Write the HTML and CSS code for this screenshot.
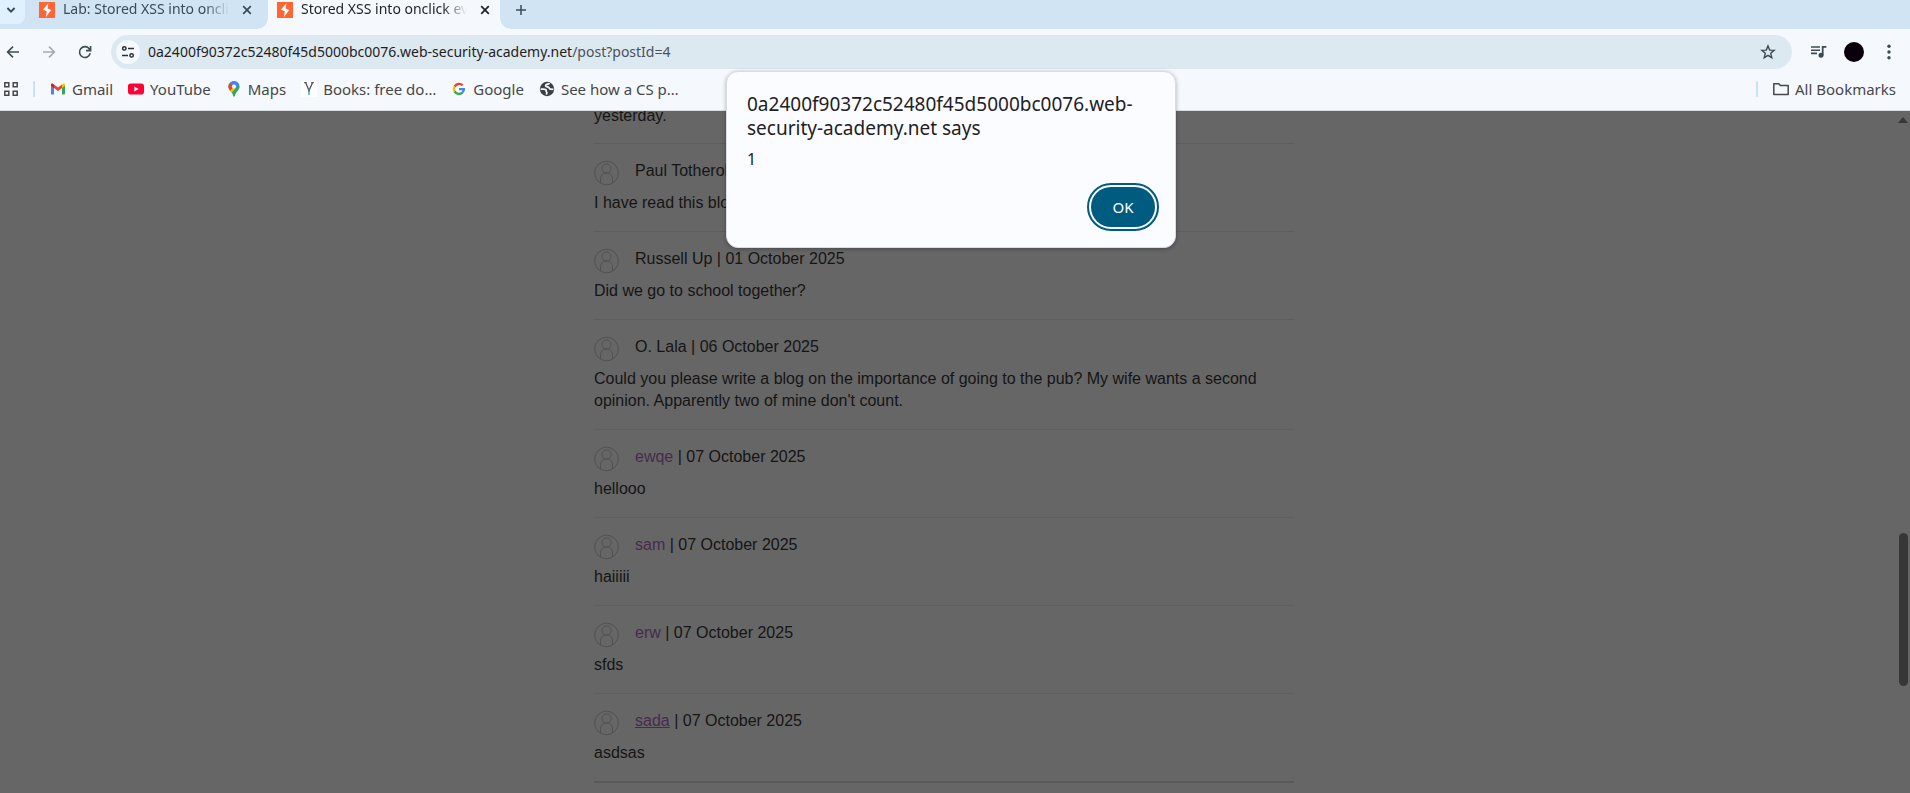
FILE: index.html
```html
<!DOCTYPE html>
<html lang="en">
<head>
<meta charset="utf-8">
<title>Stored XSS into onclick event</title>
<link rel="stylesheet" href="styles.css">
</head>
<body>
<svg class="defs" aria-hidden="true">
  <symbol id="burp" viewBox="0 0 16 16">
    <rect width="16" height="16" fill="#ff6633"/>
    <path d="M9.400 1L4 7.800l3.800 1.400L6.800 15.200 12.200 8 8.600 6.600z" fill="#fff"/>
  </symbol>
  <symbol id="cross" viewBox="0 0 10 10">
    <path d="M1.2 1.2l7.6 7.6M8.8 1.2L1.2 8.8" fill="none" stroke="currentColor" stroke-width="1.7"/>
  </symbol>
  <symbol id="avatar" viewBox="0 0 26 26">
    <g fill="none" stroke="currentColor" stroke-width="1">
      <circle cx="13" cy="13" r="12.3"/>
      <circle cx="13" cy="8.3" r="4.7"/>
      <path d="M6.8 23.4v-4.6c0-3.6 2.4-5.9 6.2-5.9s6.2 2.3 6.2 5.9v4.6"/>
    </g>
  </symbol>
</svg>

<div class="browser">
  <header class="chrome">
    <div class="tabstrip">
      <button class="tab-search" aria-label="Search tabs">
        <svg width="10" height="10" viewBox="0 0 10 10"><path d="M1.4 3l3.6 3.6L8.6 3" fill="none" stroke="currentColor" stroke-width="1.9"/></svg>
      </button>
      <div class="tab">
        <svg class="favicon"><use href="#burp"/></svg>
        <span class="tab-title">Lab: Stored XSS into onclick event</span>
        <button class="tab-close" aria-label="Close tab"><svg width="10" height="10"><use href="#cross"/></svg></button>
      </div>
      <div class="tab tab-active">
        <svg class="favicon"><use href="#burp"/></svg>
        <span class="tab-title">Stored XSS into onclick event</span>
        <button class="tab-close" aria-label="Close tab"><svg width="10" height="10"><use href="#cross"/></svg></button>
      </div>
      <button class="new-tab" aria-label="New tab">
        <svg width="12" height="12" viewBox="0 0 12 12"><path d="M6 1v10M1 6h10" fill="none" stroke="currentColor" stroke-width="1.5"/></svg>
      </button>
    </div>

    <div class="toolbar">
      <div class="nav">
        <button aria-label="Back"><svg width="14" height="14" viewBox="0 0 14 14"><path d="M13 7H2M7 1.6L1.6 7 7 12.4" fill="none" stroke="currentColor" stroke-width="1.6"/></svg></button>
        <button aria-label="Forward" disabled><svg width="14" height="14" viewBox="0 0 14 14"><path d="M1 7h11M7 1.6L12.4 7 7 12.4" fill="none" stroke="currentColor" stroke-width="1.6"/></svg></button>
        <button aria-label="Reload"><svg width="14" height="14" viewBox="0 0 14 14"><path d="M12.2 8.2A5.4 5.4 0 1 1 11.4 4L12.4 5.2M12.6 1v4.6H8" fill="none" stroke="currentColor" stroke-width="1.6"/></svg></button>
      </div>
      <div class="omnibox">
        <button class="site-info" aria-label="View site information">
          <svg width="14" height="14" viewBox="0 0 14 14"><g fill="none" stroke="currentColor" stroke-width="1.5"><circle cx="3.3" cy="3.4" r="1.7"/><path d="M7 3.4h6M1 10.4h6"/><circle cx="10.6" cy="10.4" r="1.7"/></g></svg>
        </button>
        <div class="url">0a2400f90372c52480f45d5000bc0076.web-security-academy.net<span class="url-path">/post?postId=4</span></div>
        <button class="star" aria-label="Bookmark this tab">
          <svg width="16" height="16" viewBox="0 0 16 16"><path d="M8 1.9l1.7 4.2 4.5.3-3.5 2.9 1.1 4.4L8 11.3l-3.8 2.4 1.1-4.4-3.5-2.9 4.5-.3z" fill="none" stroke="currentColor" stroke-width="1.4"/></svg>
        </button>
      </div>
      <div class="actions">
        <button aria-label="Media controls"><svg width="16" height="16" viewBox="0 0 16 16"><path d="M0 3h9M0 6.2h9M0 9.4h6" stroke="currentColor" stroke-width="1.6"/><circle cx="10" cy="11.3" r="2.5" fill="currentColor"/><path d="M11.7 11.3V2.9H15.4" fill="none" stroke="currentColor" stroke-width="1.8"/></svg></button>
        <button class="profile" aria-label="Profile"></button>
        <button aria-label="Menu"><svg width="16" height="16" viewBox="0 0 16 16" fill="currentColor"><circle cx="8" cy="2.3" r="1.7"/><circle cx="8" cy="8" r="1.7"/><circle cx="8" cy="13.7" r="1.7"/></svg></button>
      </div>
    </div>

    <nav class="bookmarks">
      <button class="apps" aria-label="Apps"><svg width="14" height="14" viewBox="0 0 14 14"><g fill="none" stroke="currentColor" stroke-width="1.5"><path d="M.8.8h4v4h-4zM9.2.8h4v4h-4zM.8 9.2h4v4h-4zM9.2 9.2h4v4h-4z"/></g></svg></button>
      <span class="divider"></span>
      <a class="bookmark" href="#"><svg width="16" height="16" viewBox="0 0 16 16"><path d="M1 13.4V4l3 2.2v7.2H2A1 1 0 0 1 1 13.4z" fill="#4285f4"/><path d="M12 6.2L15 4v8.4a1 1 0 0 1-1 1h-2z" fill="#34a853"/><path d="M12 3.4l1-.7c.9-.7 2-.1 2 1v1.1l-3 2.3z" fill="#fbbc04"/><path d="M4 7.1V3.4L8 6.4l4-3v3.7l-4 3z" fill="#ea4335"/><path d="M1 3.7c0-1.1 1.100-1.700 2-1l1 .7v3.700L1 4.800z" fill="#c5221f"/></svg>Gmail</a>
      <a class="bookmark" href="#"><svg width="16" height="16" viewBox="0 0 16 16"><rect y="2.400" width="16" height="11.200" rx="2.800" fill="#ff0033"/><path d="M6.300 5.600v4.800L10.600 8z" fill="#fff"/></svg>YouTube</a>
      <a class="bookmark" href="#"><svg width="16" height="16" viewBox="0 0 16 16"><defs><clipPath id="pin"><path d="M8 0a5.600 5.600 0 0 0-5.600 5.600c0 2 1 3.300 2.400 4.900C6.200 12 6.800 13.300 7.200 15c.2 1 1.400 1 1.600 0 .4-1.700 1-3 2.400-4.500 1.400-1.600 2.400-2.900 2.400-4.900A5.600 5.600 0 0 0 8 0z"/></clipPath></defs><g clip-path="url(#pin)"><path d="M0 0h16v16H0z" fill="#34a853"/><path d="M0 12l9.400-4.500L8 5 4 6z" fill="#fbbc04"/><path d="M3 10.500l5-5.500 2 2-5 5.500z" fill="#fbbc04"/><path d="M1 2l3-.6L8 5.600 3.800 10 0 8z" fill="#ea4335"/><path d="M3.400 1.400L8-1l6 3-2.400 1L8 5.600z" fill="#4285f4"/><path d="M8 5.600l3.500-4 2 2L9 9z" fill="#4285f4"/></g><circle cx="8" cy="5.600" r="2.100" fill="#fff"/></svg>Maps</a>
      <a class="bookmark" href="#"><svg width="16" height="16" viewBox="0 0 16 16"><path d="M0 0h16v16H0z" fill="#fff"/><path d="M3.200 1.600h2.600M10.200 1.600h2.600M4.600 1.600L8 9.600l3.600-8" fill="none" stroke="#555" stroke-width="1.300"/><path d="M8 8v3" stroke="#666" stroke-width="1.600"/><path d="M8 10.500V14" stroke="#5bc0de" stroke-width="1.800"/></svg>Books: free do…</a>
      <a class="bookmark" href="#"><svg width="16" height="16" viewBox="0 0 16 16"><circle cx="8" cy="8" r="8" fill="#fff"/><g fill="none" stroke-width="2.400"><path d="M11.600 4.400A5 5 0 0 0 3.600 5.600" stroke="#ea4335"/><path d="M3.600 5.600a5 5 0 0 0 0 4.800" stroke="#fbbc04"/><path d="M3.600 10.400a5 5 0 0 0 7.700 1.300" stroke="#34a853"/><path d="M11.300 11.700A5 5 0 0 0 12.900 8.100H8" stroke="#4285f4"/></g></svg>Google</a>
      <a class="bookmark" href="#"><svg width="16" height="16" viewBox="0 0 16 16"><circle cx="8" cy="8" r="7.200" fill="#3c4043"/><path d="M10.400 2.200c-.6 1.500-3.600.6-3.800 2.400-.1 1.300 1.500 1.200 2.600 1.500 1.200.3.800 1.900 2.200 2l3 .2M1.600 8c1.700.5 3.600-.2 5 .5 1.100.7.200 1.700.9 2.400.8.700.4 1.700-.2 2.700" fill="none" stroke="#f5f9fe" stroke-width="1.800"/></svg>See how a CS p…</a>
      <span class="spacer"></span>
      <span class="divider"></span>
      <a class="bookmark all" href="#"><svg width="16" height="16" viewBox="0 0 16 16"><path d="M.8 12.600V2.800h5l1.600 1.700h7.800v8.900H.8z" fill="none" stroke="currentColor" stroke-width="1.500" stroke-linejoin="round"/></svg>All Bookmarks</a>
    </nav>
  </header>

  <div class="viewport">
    <main class="page">
      <div class="comments">
        <div class="cut-off"><p>yesterday.</p></div>
        <section class="comment"><div class="author"><svg class="avatar"><use href="#avatar"/></svg><span>Paul Totheroh</span></div><p>I have read this blog</p></section>
        <section class="comment"><div class="author"><svg class="avatar"><use href="#avatar"/></svg><span>Russell Up | 01 October 2025</span></div><p>Did we go to school together?</p></section>
        <section class="comment"><div class="author"><svg class="avatar"><use href="#avatar"/></svg><span>O. Lala | 06 October 2025</span></div><p>Could you please write a blog on the importance of going to the pub? My wife wants a second opinion. Apparently two of mine don't count.</p></section>
        <section class="comment"><div class="author"><svg class="avatar"><use href="#avatar"/></svg><span><a href="#">ewqe</a> | 07 October 2025</span></div><p>hellooo</p></section>
        <section class="comment"><div class="author"><svg class="avatar"><use href="#avatar"/></svg><span><a href="#">sam</a> | 07 October 2025</span></div><p>haiiiii</p></section>
        <section class="comment"><div class="author"><svg class="avatar"><use href="#avatar"/></svg><span><a href="#">erw</a> | 07 October 2025</span></div><p>sfds</p></section>
        <section class="comment"><div class="author"><svg class="avatar"><use href="#avatar"/></svg><span><a class="hovered" href="#">sada</a> | 07 October 2025</span></div><p>asdsas</p></section>
        <hr>
      </div>
    </main>
    <div class="scrollbar">
      <svg width="10" height="6" viewBox="0 0 10 6"><path d="M5 0l5 6H0z" fill="currentColor"/></svg>
      <div class="track"><div class="thumb"></div></div>
    </div>
  </div>

  <div class="dialog" role="alertdialog" aria-labelledby="dialog-title" aria-describedby="dialog-text">
    <h1 id="dialog-title">0a2400f90372c52480f45d5000bc0076.web-security-academy.net says</h1>
    <p id="dialog-text">1</p>
    <button class="ok">OK</button>
  </div>
</div>
</body>
</html>
```
FILE: styles.css
```css
* {
  box-sizing: border-box;
}

body,
p,
h1 {
  margin: 0;
}

button {
  padding: 0;
  border: 0;
  background: none;
  color: inherit;
  font: inherit;
  display: flex;
  align-items: center;
  justify-content: center;
}

a {
  text-decoration: none;
}

svg {
  flex: none;
  display: block;
}

.defs {
  display: none;
}

.browser {
  position: relative;
  height: 100vh;
  display: flex;
  flex-direction: column;
  overflow: hidden;
  font-family: "Noto Sans", sans-serif;
  font-size: 15px;
  color: #474747;
}

.chrome {
  flex: none;
  background: #f5f9fe;
  border-bottom: 1px solid #d9dde1;
}

/* Tabs */
.tabstrip {
  height: 29px;
  display: flex;
  background: #d1e4f4;
  color: #3b4a57;
}

.tab-search {
  width: 25px;
  height: 24px;
  padding-right: 4px;
  padding-bottom: 4px;
  background: #dff1fe;
  border-radius: 0 0 8px 0;
}

.tab {
  width: 243px;
  height: 29px;
  padding: 0 16px 10px 14px;
  display: flex;
  align-items: center;
  gap: 8px;
}

.tab-active {
  width: 232px;
  padding: 0 10px 10px 9px;
  background: #f5f9fe;
  color: #1f2124;
  position: relative;
}

.tab-active::before,
.tab-active::after {
  content: "";
  position: absolute;
  bottom: 0;
  width: 10px;
  height: 10px;
}

.tab-active::before {
  right: 100%;
  background: radial-gradient(circle at 0 0, transparent 9px, #f5f9fe 10px);
}

.tab-active::after {
  left: 100%;
  background: radial-gradient(circle at 100% 0, transparent 9px, #f5f9fe 10px);
}

.favicon {
  width: 16px;
  height: 16px;
}

.tab-title {
  flex: 1;
  margin-right: 5px;
  padding-bottom: 2px;
  overflow: hidden;
  white-space: nowrap;
  font-size: 14px;
  line-height: 18px;
  -webkit-mask-image: linear-gradient(to left, transparent, #000 24px);
  mask-image: linear-gradient(to left, transparent, #000 24px);
}

.new-tab {
  width: 42px;
  height: 19px;
}

/* Toolbar */
.toolbar {
  height: 46px;
  padding: 0 13px 0 0;
  display: flex;
  align-items: center;
  color: #3c4a55;
}

.nav {
  width: 111px;
  padding-left: 6px;
  display: flex;
  gap: 22px;
}

.nav button:disabled {
  color: #a5abb1;
}

.omnibox {
  flex: 1;
  height: 34px;
  padding: 0 16px 0 5px;
  display: flex;
  align-items: center;
  border-radius: 17px;
  background: #dde9f1;
}

.site-info {
  width: 24px;
  height: 24px;
  border-radius: 50%;
  background: #f5f9fe;
  color: #2b3036;
}

.url {
  flex: 1;
  padding-left: 8px;
  padding-bottom: 2px;
  font-size: 14px;
  color: #1f2124;
}

.url-path {
  color: #4a5259;
}

.actions {
  padding-left: 19px;
  display: flex;
  align-items: center;
  gap: 17px;
}

.profile {
  width: 20px;
  height: 20px;
  border-radius: 50%;
  background: #0a000c;
}

/* Bookmarks bar */
.bookmarks {
  height: 35px;
  padding: 0 14px 8px 4px;
  display: flex;
  align-items: center;
}

.apps {
  margin-right: 15px;
}

.divider {
  width: 2px;
  height: 16px;
  border-radius: 1px;
  background: #c2e3fb;
}

.bookmark {
  margin-left: 15px;
  display: flex;
  align-items: center;
  gap: 6px;
  line-height: 18px;
  color: #474747;
}

.spacer {
  flex: 1;
}

/* Page under the modal scrim */
.viewport {
  flex: 1;
  min-height: 0;
  display: flex;
  overflow: hidden;
  background: #666;
  color: #151515;
  font-family: "Liberation Sans", Arial, sans-serif;
  font-size: 16px;
  line-height: 22px;
}

.page {
  flex: 1;
  overflow: hidden;
}

.comments {
  max-width: 700px;
  margin: 0 auto;
}

.cut-off {
  height: 16px;
  margin-bottom: 16px;
  display: flex;
  align-items: flex-end;
}

.comment {
  padding: 16px 0 17px;
  border-top: 1px solid #5f5f5f;
}

.author {
  display: flex;
  gap: 16px;
  margin-bottom: 6px;
}

.author a {
  color: #482a4f;
}

.author .hovered {
  text-decoration: underline;
}

.avatar {
  width: 25px;
  height: 26px;
  color: #505050;
}

.comments hr {
  height: 2px;
  margin: 0;
  border: 0;
  background: #5a5a5a;
}

.scrollbar {
  width: 22px;
  padding-top: 6px;
  display: flex;
  flex-direction: column;
  align-items: flex-end;
  padding-right: 2px;
  color: #373737;
}

.track {
  flex: 1;
  width: 9px;
  display: grid;
  grid-template-rows: 410fr 153fr 107fr;
}

.thumb {
  grid-row: 2;
  border-radius: 5px;
  background: #373737;
}

/* Alert */
.dialog {
  position: absolute;
  top: 71px;
  left: calc(50% - 229px);
  width: 450px;
  padding: 20px;
  display: flex;
  flex-direction: column;
  border: 1px solid #d9dde1;
  border-radius: 12px;
  background: #fbfcff;
  box-shadow: 0 1px 4px rgba(0, 0, 0, 0.3);
  color: #1f2124;
}

.dialog h1 {
  font-size: 19px;
  font-weight: 400;
  line-height: 24px;
}

.dialog p {
  margin-top: 9px;
  font-size: 16px;
  line-height: 20px;
}

.ok {
  align-self: flex-end;
  width: 64px;
  height: 40px;
  margin-top: 18px;
  border-radius: 20px;
  background: #005b80;
  color: #fff;
  outline: 2px solid #005b80;
  outline-offset: 2px;
}
```
